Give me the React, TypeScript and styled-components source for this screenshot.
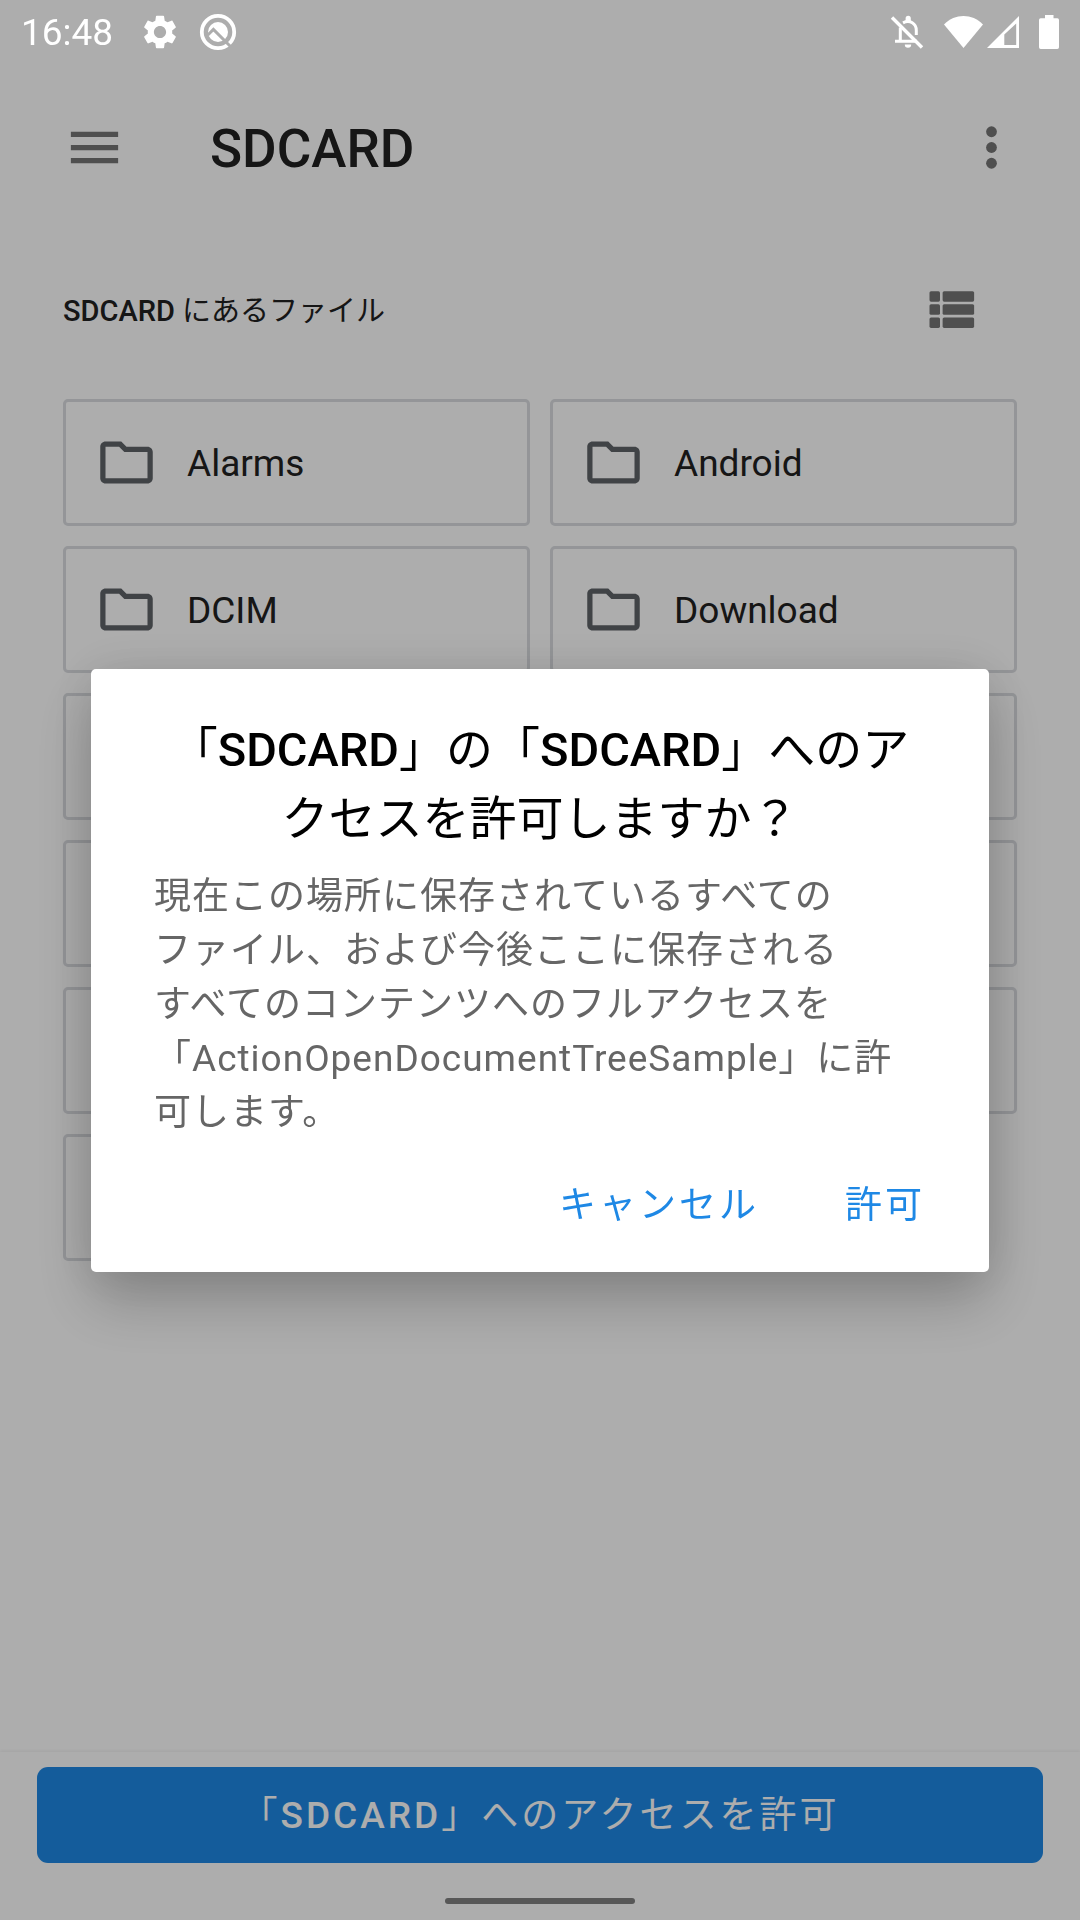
import React from "react";
import styled, { createGlobalStyle } from "styled-components";

const GlobalStyle = createGlobalStyle`
  *, *::before, *::after { box-sizing: border-box; }
  body {
    margin: 0;
    background: #ffffff;
    font-family: Roboto, "Noto Sans CJK JP", sans-serif;
    color: #212121;
  }
  button { font: inherit; color: inherit; border: 0; padding: 0; background: none; cursor: pointer; }
  h1, h2, p, ul { margin: 0; padding: 0; }
  svg { display: block; flex: none; }
`;

const Screen = styled.div`
  min-height: 100vh;
  display: flex;
  flex-direction: column;
`;

const StatusBar = styled.header`
  position: relative;
  z-index: 2;
  height: 63px;
  padding: 0 21px;
  display: flex;
  align-items: center;
  justify-content: space-between;
  color: #ffffff;
`;

const StatusGroup = styled.div<{ $gap: number }>`
  display: flex;
  align-items: center;
  gap: ${(p) => p.$gap}px;
`;

const Clock = styled.time`
  padding-top: 2px;
  font-size: 37px;
  line-height: 44px;
  margin-right: 8px;
`;

const Toolbar = styled.div`
  height: 169px;
  padding: 0 57px 0 63px;
  display: flex;
  align-items: center;
`;

const Title = styled.h1`
  flex: 1;
  padding: 2px 0 0 84px;
  font-size: 53px;
  line-height: 62px;
  font-weight: 500;
`;

const IconButton = styled.button`
  color: #757575;
`;

const ListHeader = styled.div`
  height: 155px;
  padding: 0 98px 0 63px;
  display: flex;
  align-items: center;
  justify-content: space-between;
`;

const ListTitle = styled.h2`
  padding-top: 2px;
  font-size: 29px;
  line-height: 42px;
  font-weight: 400;
`;

const Name = styled.span`
  font-weight: 500;
`;

const FolderGrid = styled.ul`
  flex: 1;
  padding: 12px 63px;
  display: grid;
  grid-template-columns: 1fr 1fr;
  grid-auto-rows: 127px;
  gap: 20px;
  list-style: none;
`;

const FolderCard = styled.li`
  border: 3px solid #dadce0;
  border-radius: 5px;
  padding: 0 29px;
  display: flex;
  align-items: center;
  gap: 29px;
`;

const FolderName = styled.span`
  padding-top: 2px;
  font-size: 37px;
  line-height: 44px;
`;

const Footer = styled.footer`
  padding: 15px 37px 16px;
  display: flex;
  flex-direction: column;
  align-items: center;
  gap: 35px;
  box-shadow: 0 -1px 3px rgba(0, 0, 0, 0.06);
`;

const AllowAccess = styled.button`
  align-self: stretch;
  height: 96px;
  padding-top: 2px;
  border-radius: 11px;
  background: #1e88e5;
  color: #ffffff;
  font-size: 37px;
  line-height: 54px;
  letter-spacing: 3px;
`;

const HomeHandle = styled.div`
  width: 190px;
  height: 6px;
  border-radius: 3px;
  background: #808080;
`;

const Scrim = styled.div`
  position: fixed;
  inset: 0;
  z-index: 1;
  padding: 63px 91px 42px;
  display: flex;
  align-items: center;
  background: rgba(0, 0, 0, 0.32);
`;

const Dialog = styled.section`
  flex: 1;
  padding: 46px 0 18px;
  border-radius: 5px;
  background: #ffffff;
  box-shadow: 0 30px 60px rgba(0, 0, 0, 0.22), 0 0 50px rgba(0, 0, 0, 0.1);
`;

const DialogTitle = styled.h2`
  padding: 0 63px;
  color: #000000;
  font-size: 47px;
  line-height: 69px;
  font-weight: 400;
  text-align: center;
`;

const DialogBody = styled.p`
  padding: 17px 63px 0;
  color: #666666;
  font-size: 37px;
  line-height: 54px;
  letter-spacing: 1px;
`;

const DialogActions = styled.div`
  padding: 18px 22px 0;
  display: flex;
  justify-content: flex-end;
  gap: 2px;
`;

const DialogButton = styled.button`
  height: 96px;
  padding: 0 42px;
  color: #1e88e5;
  font-size: 37px;
  line-height: 54px;
  letter-spacing: 3px;
`;

const GearIcon = () => (
  <svg width="34" height="34" viewBox="2 2 20 20" fill="currentColor" aria-hidden="true">
    <path d="M19.14 12.94c.04-.3.06-.61.06-.94 0-.32-.02-.64-.07-.94l2.03-1.58c.18-.14.23-.41.12-.61l-1.92-3.32c-.12-.22-.37-.29-.59-.22l-2.39.96c-.5-.38-1.03-.7-1.62-.94l-.36-2.54c-.04-.24-.24-.41-.48-.41h-3.84c-.24 0-.43.17-.47.41l-.36 2.54c-.59.24-1.13.57-1.62.94l-2.39-.96c-.22-.08-.47 0-.59.22L2.74 8.87c-.12.21-.08.47.12.61l2.03 1.58c-.05.3-.09.63-.09.94s.02.64.07.94l-2.03 1.58c-.18.14-.23.41-.12.61l1.92 3.32c.12.22.37.29.59.22l2.39-.96c.5.38 1.03.7 1.62.94l.36 2.54c.05.24.24.41.48.41h3.84c.24 0 .44-.17.47-.41l.36-2.54c.59-.24 1.13-.56 1.62-.94l2.39.96c.22.08.47 0 .59-.22l1.92-3.32c.12-.22.07-.47-.12-.61l-2.01-1.58zM12 15.6c-1.98 0-3.6-1.62-3.6-3.6s1.62-3.6 3.6-3.6 3.6 1.62 3.6 3.6-1.62 3.6-3.6 3.6z" />
  </svg>
);

const QIcon = () => (
  <svg width="38" height="38" viewBox="0 0 38 38" fill="none" aria-hidden="true">
    <circle cx="19" cy="19" r="16.2" stroke="currentColor" strokeWidth="3.8" />
    <circle cx="19" cy="19" r="10" fill="currentColor" />
    <path d="M8.6 22.2L14.4 16.4 32 34" stroke="#adadad" strokeWidth="3" />
  </svg>
);

const BellOffIcon = () => (
  <svg width="34" height="34" viewBox="0 0 34 34" fill="none" aria-hidden="true">
    <path d="M2 2.5L32 32.5" stroke="currentColor" strokeWidth="3.4" />
    <path d="M5 26.3H27M10.3 26V12.5" stroke="currentColor" strokeWidth="3" />
    <path d="M13 7.8C20 4.4 26.3 8.6 26.3 15.4V20" stroke="currentColor" strokeWidth="3" />
    <path d="M15.6 6V3.4a2.6 2.6 0 0 1 5.2 0V6zM14.8 29.6h6.4a3.2 3.2 0 0 1-6.4 0z" fill="currentColor" />
  </svg>
);

const WifiIcon = () => (
  <svg width="39" height="34" viewBox="0 0 39 34" fill="currentColor" aria-hidden="true">
    <path d="M0 9.4C11 -1.8 28 -1.8 39 9.4L19.5 33z" />
  </svg>
);

const SignalIcon = () => (
  <svg width="32" height="32" viewBox="0 0 32 32" fill="currentColor" aria-hidden="true">
    <path fillRule="evenodd" d="M0 32L32 0V32zM17.3 18.5V29H29.2V7.6z" />
  </svg>
);

const BatteryIcon = () => (
  <svg width="20" height="34" viewBox="0 0 20 34" fill="currentColor" aria-hidden="true">
    <path d="M6 0h8.500v3.300H18.300A1.700 1.700 0 0 1 20 5V32.300A1.700 1.700 0 0 1 18.300 34H1.700A1.700 1.700 0 0 1 0 32.300V5A1.700 1.700 0 0 1 1.700 3.300H6z" />
  </svg>
);

const MenuIcon = () => (
  <svg width="63" height="63" viewBox="0 0 24 24" fill="currentColor" aria-hidden="true">
    <path d="M3 18h18v-2H3v2zm0-5h18v-2H3v2zm0-7v2h18V6H3z" />
  </svg>
);

const MoreIcon = () => (
  <svg width="63" height="63" viewBox="0 0 24 24" fill="currentColor" aria-hidden="true">
    <circle cx="12" cy="6" r="2.050" />
    <circle cx="12" cy="12" r="2.050" />
    <circle cx="12" cy="18" r="2.050" />
  </svg>
);

const ListIcon = () => (
  <svg width="63" height="63" viewBox="0 0 24 24" fill="currentColor" aria-hidden="true">
    {[5, 10, 15].map((y) => (
      <React.Fragment key={y}>
        <rect x="4" y={y} width="4" height="4" rx="0.6" />
        <rect x="9" y={y} width="12" height="4" rx="0.6" />
      </React.Fragment>
    ))}
  </svg>
);

const FolderIcon = () => (
  <svg width="63" height="63" viewBox="0 0 24 24" fill="#5f6368" aria-hidden="true">
    <path d="M20 6h-8l-2-2H4C2.900 4 2 4.900 2 6v12c0 1.100.9 2 2 2h16c1.100 0 2-.9 2-2V8c0-1.100-.9-2-2-2zm0 12H4V6h5.170l2 2H20v10z" />
  </svg>
);

const folders = ["Alarms", "Android", "DCIM", "Download", "", "", "", "", "", "", ""];

export default function App() {
  return (
    <Screen>
      <GlobalStyle />
      <StatusBar>
        <StatusGroup $gap={22}>
          <Clock>16:48</Clock>
          <GearIcon />
          <QIcon />
        </StatusGroup>
        <StatusGroup $gap={20}>
          <BellOffIcon />
          <StatusGroup $gap={4}>
            <WifiIcon />
            <SignalIcon />
          </StatusGroup>
          <BatteryIcon />
        </StatusGroup>
      </StatusBar>

      <Toolbar>
        <IconButton aria-label="メニュー">
          <MenuIcon />
        </IconButton>
        <Title>SDCARD</Title>
        <IconButton aria-label="その他">
          <MoreIcon />
        </IconButton>
      </Toolbar>

      <ListHeader>
        <ListTitle>
          <Name>SDCARD</Name> にあるファイル
        </ListTitle>
        <IconButton aria-label="リスト表示">
          <ListIcon />
        </IconButton>
      </ListHeader>

      <FolderGrid>
        {folders.map((name, index) => (
          <FolderCard key={index}>
            <FolderIcon />
            {name && <FolderName>{name}</FolderName>}
          </FolderCard>
        ))}
      </FolderGrid>

      <Footer>
        <AllowAccess>
          「<Name>SDCARD</Name>」へのアクセスを許可
        </AllowAccess>
        <HomeHandle />
      </Footer>

      <Scrim>
        <Dialog role="dialog" aria-modal="true" aria-labelledby="dialog-title">
          <DialogTitle id="dialog-title">
            「<Name>SDCARD</Name>」の「<Name>SDCARD</Name>」へのア
            <br />
            クセスを許可しますか？
          </DialogTitle>
          <DialogBody>
            現在この場所に保存されているすべての
            <br />
            ファイル、および今後ここに保存される
            <br />
            すべてのコンテンツへのフルアクセスを
            <br />
            「ActionOpenDocumentTreeSample」に許
            <br />
            可します。
          </DialogBody>
          <DialogActions>
            <DialogButton>キャンセル</DialogButton>
            <DialogButton>許可</DialogButton>
          </DialogActions>
        </Dialog>
      </Scrim>
    </Screen>
  );
}
